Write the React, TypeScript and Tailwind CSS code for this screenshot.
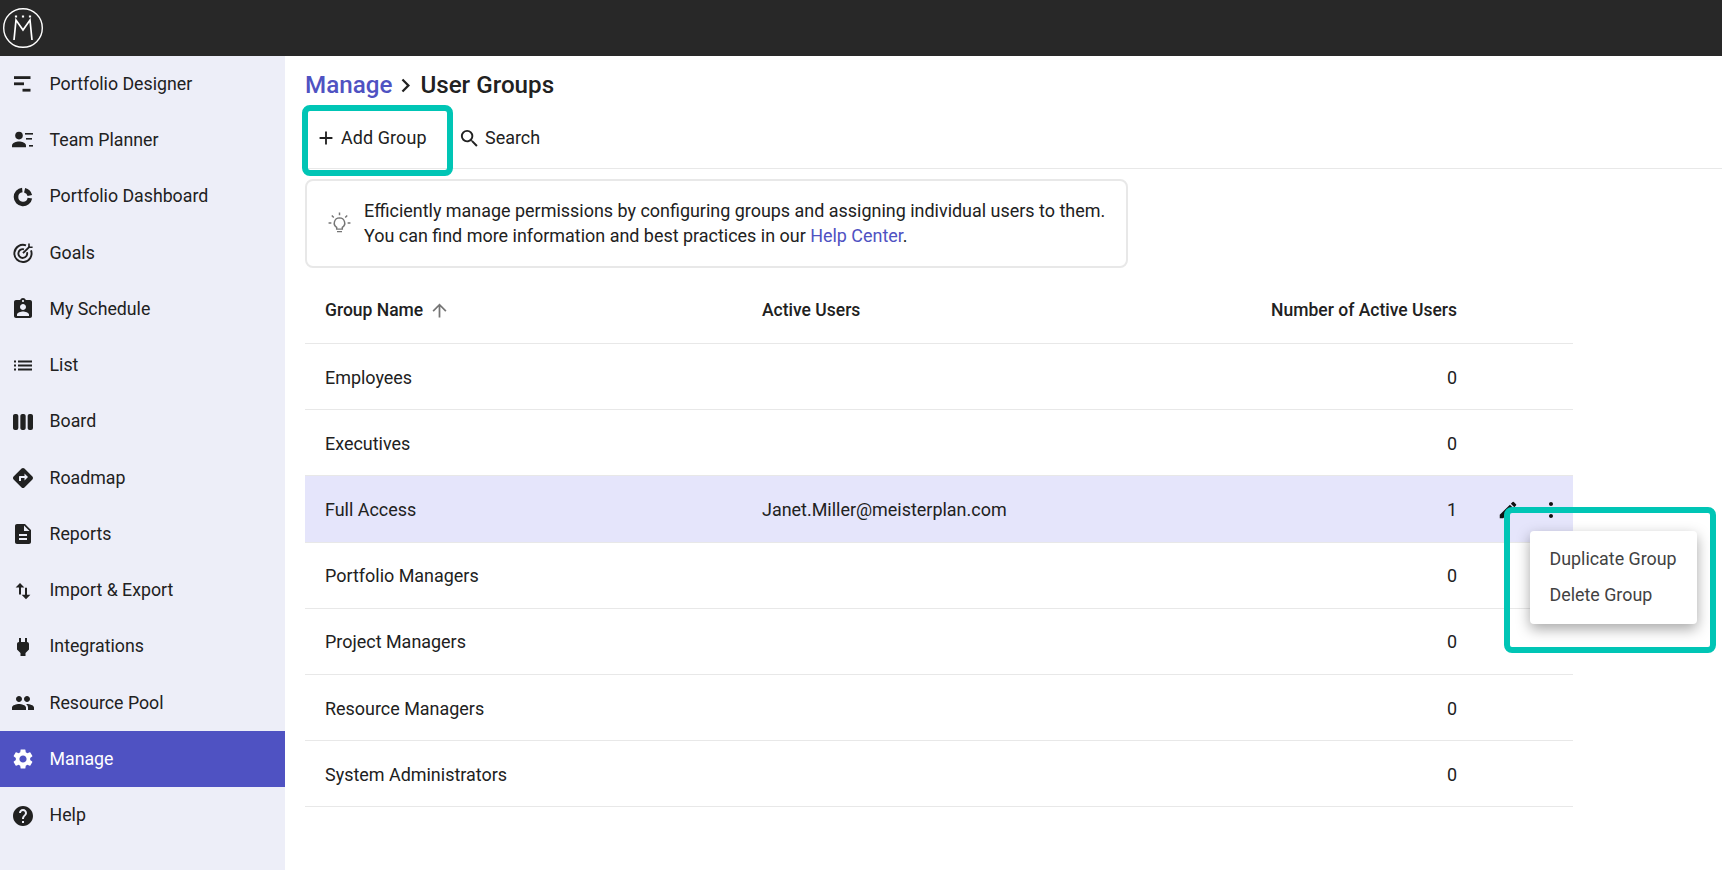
import React from "react";
import {
  MdAdd, MdArrowUpward, MdAssignmentInd, MdChevronRight, MdDescription, MdDirections, MdEdit, MdGroup,
  MdHelp, MdList, MdMoreVert, MdPower, MdSearch, MdSettings, MdViewWeek,
} from "react-icons/md";

const DesignerIcon = () => (
  <svg viewBox="0 0 24 24" className="w-6 h-6" fill="currentColor">
    <rect x="3" y="4.2" width="16.5" height="2.8" />
    <rect x="3" y="10.4" width="10" height="2.8" />
    <rect x="11.5" y="16.8" width="8" height="2.8" />
  </svg>
);
const TeamIcon = () => (
  <svg viewBox="0 0 24 24" className="w-6 h-6" fill="currentColor">
    <circle cx="8" cy="7.6" r="3.8" />
    <path d="M1 19.2v-1.6c0-2.6 4.4-4 7-4s7 1.4 7 4v1.6z" />
    <rect x="14" y="5" width="8" height="1.6" />
    <rect x="15" y="10" width="6" height="1.6" />
    <rect x="18" y="17" width="4" height="1.6" />
  </svg>
);
const DonutIcon = () => (
  <svg viewBox="0 0 24 24" className="w-6 h-6" fill="none" stroke="currentColor" strokeWidth="4.6">
    <path d="M11.3 5.04a7 7 0 1 0 7.6 8.16" />
    <path d="M13.6 5.2a7 7 0 0 1 5.25 5.3" />
  </svg>
);
const GoalIcon = () => (
  <svg viewBox="0 0 24 24" className="w-6 h-6" fill="none" stroke="currentColor" strokeWidth="1.9">
    <path d="M15 4.4a8.6 8.6 0 1 0 5 5" />
    <path d="M13 8.3a4.4 4.4 0 1 0 3 3" />
    <path d="M12 12.2 18.6 5.6" />
    <path d="M18 2.6v3.6h3.6" strokeWidth="1.6" />
  </svg>
);
const TransferIcon = () => (
  <svg viewBox="0 0 24 24" className="w-6 h-6" fill="currentColor">
    <path d="M9 4 4.6 8.5H8v7h2v-7h3.4z" />
    <path d="M15 20.2l4.4-4.5H16v-7h-2v7h-3.4z" />
  </svg>
);
const BulbIcon = () => (
  <svg viewBox="0 0 24 24" className="h-[25px] w-[25px]" fill="none" stroke="#757575" strokeWidth="1.4">
    <path d="M12 6.6a5 5 0 0 0-2.7 9.2v1.6h5.4v-1.6A5 5 0 0 0 12 6.6z" />
    <path d="M9.6 19.8h4.8M12 1.5v2.6M4.6 4.4l1.9 1.9M19.4 4.4l-1.9 1.9M1.5 11.5h2.7M19.8 11.5h2.7" />
  </svg>
);

const nav: { label: string; icon: React.ReactNode; active?: boolean }[] = [
  { label: "Portfolio Designer", icon: <DesignerIcon /> },
  { label: "Team Planner", icon: <TeamIcon /> },
  { label: "Portfolio Dashboard", icon: <DonutIcon /> },
  { label: "Goals", icon: <GoalIcon /> },
  { label: "My Schedule", icon: <MdAssignmentInd size={24} /> },
  { label: "List", icon: <MdList size={25} /> },
  { label: "Board", icon: <MdViewWeek size={26} /> },
  { label: "Roadmap", icon: <MdDirections size={24} /> },
  { label: "Reports", icon: <MdDescription size={24} /> },
  { label: "Import & Export", icon: <TransferIcon /> },
  { label: "Integrations", icon: <MdPower size={24} /> },
  { label: "Resource Pool", icon: <MdGroup size={24} /> },
  { label: "Manage", icon: <MdSettings size={24} />, active: true },
  { label: "Help", icon: <MdHelp size={24} /> },
];

const rows = [
  { name: "Employees", users: "", count: 0 },
  { name: "Executives", users: "", count: 0 },
  { name: "Full Access", users: "Janet.Miller@meisterplan.com", count: 1, active: true },
  { name: "Portfolio Managers", users: "", count: 0 },
  { name: "Project Managers", users: "", count: 0 },
  { name: "Resource Managers", users: "", count: 0 },
  { name: "System Administrators", users: "", count: 0 },
];

export default function App() {
  return (
    <div className="relative h-[870px] w-[1722px] overflow-hidden bg-white text-[17.96px] text-[#212121] font-['Roboto',sans-serif]">
      <header className="flex h-14 items-center bg-[#282828] pl-[3px]">
        <svg viewBox="0 0 40 40" className="h-10 w-10" fill="none" stroke="white" strokeWidth="1.4">
          <circle cx="20" cy="20" r="19.3" />
          <path d="M11 32 13 12l7 10 7-10 2 20" strokeWidth="1.7" />
          <path d="M13 7.4v2.2M20 7.4v2.2M27 7.4v2.2" strokeWidth="2.2" />
        </svg>
      </header>
      <div className="flex h-[814px]">
        <nav className="h-full w-[285px] shrink-0 bg-[#edeef8] text-[17.75px]">
          {nav.map((n) => (
            <div
              key={n.label}
              className={`flex h-[56.27px] items-center gap-[14.5px] pl-[11px] ${n.active ? "bg-[#4f52c2] text-white" : "text-[#212121]"}`}
            >
              <span className="flex w-6 items-center justify-center">{n.icon}</span>
              <span>{n.label}</span>
            </div>
          ))}
        </nav>
        <main className="flex-1 pl-5">
          <h1 className="flex h-[49px] items-center pt-[9px] text-[24.2px] font-medium">
            <span className="text-[#4f52c2]">Manage</span>
            <MdChevronRight size={27} className="mr-[1px]" />
            <span>User Groups</span>
          </h1>
          <div className="flex h-[64px] items-center border-b border-[#e8e8e8] pt-[4px]">
            <div className="flex w-[149px] items-center pl-[10px]">
              <MdAdd size={22} className="mr-[4px]" />
              <span className="tracking-[0.1px]">Add Group</span>
            </div>
            <div className="flex items-center pl-[4px]">
              <MdSearch size={23} className="mr-[4px]" />
              <span>Search</span>
            </div>
          </div>
          <div className="mt-[10px] flex h-[89px] w-[823px] items-center rounded-lg border-2 border-[#e8e8e8]">
            <span className="ml-[20px] mr-[12px] flex">
              <BulbIcon />
            </span>
            <p className="leading-[24.5px]">
              Efficiently manage permissions by configuring groups and assigning individual users to them.
              <br />
              You can find more information and best practices in our <span className="text-[#4f52c2]">Help Center</span>.
            </p>
          </div>
          <div className="w-[1267.5px]">
            <div className="flex h-[76px] items-center border-b border-[#e8e8e8] pl-5 pt-[10px] text-[17.5px] font-medium">
              <div className="flex w-[437px] items-center">
                Group Name
                <MdArrowUpward size={21} className="ml-[6px] text-[#757575]" />
              </div>
              <div className="flex-1">Active Users</div>
              <div className="pr-[115.5px]">Number of Active Users</div>
            </div>
            {rows.map((r) => (
              <div
                key={r.name}
                className={`flex h-[66.2px] items-center border-b border-[#e8e8e8] pl-5 ${r.active ? "bg-[#e5e5fb]" : ""}`}
              >
                <div className="w-[437px] pt-[3px]">{r.name}</div>
                <div className="flex-1 pt-[3px]">{r.users}</div>
                <div className="pt-[3px]">{r.count}</div>
                <div className="flex w-[115.5px] items-center pl-[40px] pt-[2px]">
                  {r.active && (
                    <>
                      <MdEdit size={22} className="text-[#111]" />
                      <MdMoreVert size={24} className="ml-[20px] text-[#111]" />
                    </>
                  )}
                </div>
              </div>
            ))}
          </div>
        </main>
      </div>

      <div className="absolute left-[302px] top-[105px] h-[71px] w-[151px] rounded-lg border-[6px] border-[#00c5b5]" />
      <div className="absolute left-[1504px] top-[507px] h-[146px] w-[212px] rounded-lg border-[6px] border-[#00c5b5]" />
      <div className="absolute left-[1530px] top-[531px] flex h-[93px] w-[167px] flex-col justify-center gap-[9px] rounded bg-white pl-[19.5px] text-[17.85px] text-[#424242] shadow-[0_5px_14px_rgba(0,0,0,0.35)]">
        <span>Duplicate Group</span>
        <span>Delete Group</span>
      </div>
    </div>
  );
}
